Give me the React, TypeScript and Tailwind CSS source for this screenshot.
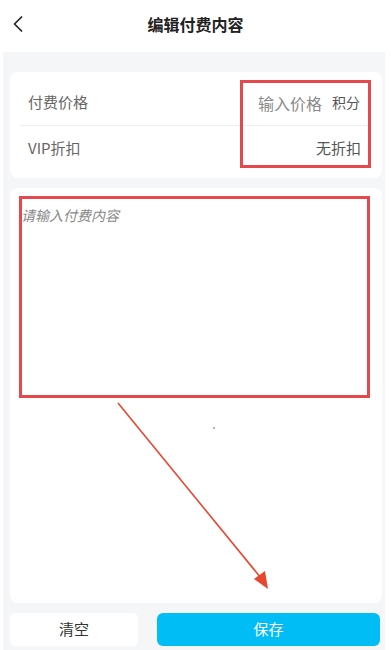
import React from "react";

export default function App() {
  const font = { fontFamily: '"Noto Sans CJK SC", "Noto Sans", sans-serif' };
  return (
    <div className="relative w-[391px] h-[650px] bg-white flex flex-col overflow-hidden" style={font}>
      {/* Header */}
      <div className="relative h-[52px] flex items-center justify-center shrink-0">
        <svg className="absolute left-[12px] top-[15px]" width="12" height="18" viewBox="0 0 12 18">
          <path d="M9.5 2 L2.5 9 L9.5 16" fill="none" stroke="#222" strokeWidth="1.7" strokeLinecap="round" strokeLinejoin="round" />
        </svg>
        <span className="text-[16px] font-bold text-[#222] leading-none -mt-[4px]">编辑付费内容</span>
      </div>

      {/* Body */}
      <div className="flex-1 ml-[3px] mr-[6px] bg-[#f5f6f7] pl-[7px] pr-[3px] pt-[20px] pb-[4px] flex flex-col">
        <div className="h-[106px] bg-white rounded-[8px] flex flex-col px-[10px] shrink-0">
          <div className="h-[54px] flex items-center justify-between border-b border-[#eeeeee] px-[8px] pt-[8px]">
            <span className="text-[15px] text-[#666]">付费价格</span>
            <span className="flex items-center gap-[10px] pr-[4px]">
              <span className="text-[16px] text-[#8a8a8a]">输入价格</span>
              <span className="text-[14px] text-[#555]">积分</span>
            </span>
          </div>
          <div className="h-[52px] flex items-center justify-between px-[8px] pb-[8px]">
            <span className="text-[15px] text-[#666]">VIP折扣</span>
            <span className="text-[15px] text-[#555] pr-[3px]">无折扣</span>
          </div>
        </div>

        <div className="mt-[10px] flex-1 bg-white rounded-[8px] pl-[11px] pt-[14px]">
          <span className="text-[14px] italic text-[#888]">请输入付费内容</span>
        </div>

        <div className="mt-[10px] h-[33px] flex gap-[19px] pr-[2px] shrink-0">
          <button className="w-[128px] h-full bg-white rounded-[5px] text-[15px] text-[#333]">清空</button>
          <button className="flex-1 h-full bg-[#00bdf6] rounded-[6px] text-[15px] text-white">保存</button>
        </div>
      </div>

      {/* Annotations */}
      <div className="absolute left-[240px] top-[80px] w-[131px] h-[88px] border-[3px] border-[#e5484d] pointer-events-none" />
      <div className="absolute left-[19px] top-[196px] w-[351px] h-[202px] border-[3px] border-[#e5484d] pointer-events-none" />
      <svg className="absolute left-0 top-0 pointer-events-none" width="391" height="650" viewBox="0 0 391 650">
        <line x1="118" y1="403" x2="261" y2="578" stroke="#e8472f" strokeWidth="1.6" />
        <polygon points="268,589 254,579 265,571" fill="#e8472f" />
        <circle cx="214" cy="428" r="0.7" fill="#333" />
      </svg>
    </div>
  );
}
